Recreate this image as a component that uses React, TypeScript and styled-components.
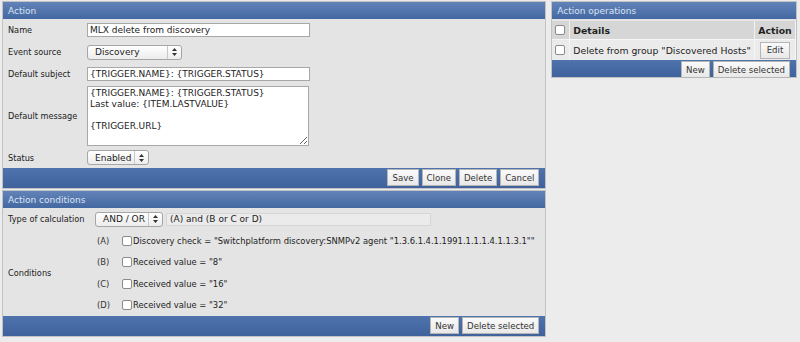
import React from "react";
import styled, { createGlobalStyle } from "styled-components";

const GlobalStyle = createGlobalStyle`
  body {
    margin: 0;
    background: #ececec;
    font-family: "DejaVu Sans", Verdana, sans-serif;
    color: #222;
  }
`;

const Page = styled.div`
  display: flex;
  align-items: flex-start;
  gap: 5px;
  padding: 1px 3px 0 2px;
`;

const Column = styled.div<{ width: number }>`
  display: flex;
  flex-direction: column;
  gap: 1px;
  width: ${(p) => p.width}px;
`;

const Panel = styled.div`
  border: 1px solid #c2c2c2;
  background: #e4e4e4;
`;

const PanelHeader = styled.div`
  height: 17px;
  display: flex;
  align-items: center;
  padding-left: 5px;
  font-size: 9px;
  color: #dbe4f2;
  background: linear-gradient(#6283b8, #4468a2);
`;

const FormRow = styled.div<{ height?: number; labelWidth?: number }>`
  display: grid;
  grid-template-columns: ${(p) => p.labelWidth ?? 79}px 1fr;
  align-items: center;
  min-height: ${(p) => p.height ?? 22}px;
  padding-left: 5px;
`;

const Label = styled.span`
  font-size: 8.2px;
  color: #222;
`;

const TextInput = styled.div<{ width: number }>`
  width: ${(p) => p.width}px;
  height: 14px;
  box-sizing: border-box;
  border: 1px solid #a8a8a8;
  background: #fff;
  font-size: 9px;
  line-height: 12px;
  padding-left: 2px;
  white-space: nowrap;
  overflow: hidden;
`;

const TextArea = styled.textarea`
  width: 222px;
  height: 60px;
  box-sizing: border-box;
  border: 1px solid #a8a8a8;
  background: #fff;
  font-family: "DejaVu Sans", Verdana, sans-serif;
  font-size: 9px;
  line-height: 11px;
  padding: 1px 2px;
  margin: 0;
  color: #222;
  resize: both;
  overflow: hidden;
`;

const SelectBox = styled.div<{ width: number }>`
  width: ${(p) => p.width}px;
  height: 15px;
  box-sizing: border-box;
  display: flex;
  align-items: center;
  border: 1px solid #a6a6a6;
  border-radius: 3px;
  background: linear-gradient(#ffffff, #ececec);
  font-size: 9px;
`;

const SelectText = styled.span`
  flex: 1;
  padding-left: 7px;
`;

const SelectArrow = styled.span`
  width: 13px;
  height: 100%;
  display: flex;
  align-items: center;
  justify-content: center;
  border-left: 1px solid #c8c8c8;
`;

const Footer = styled.div<{ height: number }>`
  height: ${(p) => p.height}px;
  display: flex;
  justify-content: flex-end;
  align-items: flex-start;
  gap: 3px;
  padding: 1px 6px 0 0;
  background: linear-gradient(#4f73ad, #3f629c);
`;

const Button = styled.button`
  height: 17px;
  box-sizing: border-box;
  padding: 0 4px;
  border: 1px solid #b5b5b5;
  background: linear-gradient(#fafafa, #e8e8e8);
  font-family: "DejaVu Sans", Verdana, sans-serif;
  font-size: 8.6px;
  color: #333;
  cursor: pointer;
`;

const CalcField = styled.div`
  width: 265px;
  height: 13px;
  box-sizing: border-box;
  margin-left: 3px;
  border: 1px solid #d6d6d6;
  background: #ebebeb;
  font-size: 9px;
  line-height: 11px;
  padding-left: 3px;
`;

const Inline = styled.div`
  display: flex;
  align-items: center;
`;

const ConditionList = styled.div`
  display: flex;
  flex-direction: column;
`;

const ConditionRow = styled.div`
  display: flex;
  align-items: center;
  height: 21.5px;
  font-size: 8.4px;
  white-space: nowrap;
`;

const CondId = styled.span`
  width: 25px;
  padding-left: 2px;
  color: #333;
`;

const Check = styled.span`
  width: 8px;
  height: 8px;
  border: 1px solid #8a8a8a;
  border-radius: 2px;
  background: #fff;
  margin-right: 1px;
  flex-shrink: 0;
`;

const OpTable = styled.div`
  margin-top: 2px;
  display: grid;
  grid-template-columns: 18px 1fr 41px;
  font-size: 9px;
`;

const HeadCell = styled.div<{ left?: boolean }>`
  height: 18px;
  display: flex;
  align-items: center;
  justify-content: ${(p) => (p.left ? "flex-start" : "center")};
  padding-left: ${(p) => (p.left ? 3 : 0)}px;
  background: #d6d6d6;
  border-right: 1px solid #f2f2f2;
  font-weight: bold;
  font-size: 9.3px;
`;

const Cell = styled.div<{ left?: boolean }>`
  height: 20px;
  display: flex;
  align-items: center;
  justify-content: ${(p) => (p.left ? "flex-start" : "center")};
  padding-left: ${(p) => (p.left ? 3 : 0)}px;
  background: #ebebeb;
  border-right: 1px solid #f6f6f6;
  border-top: 1px solid #f6f6f6;
  font-size: 9.3px;
  white-space: nowrap;
`;

const SmallButton = styled(Button)`
  height: 17px;
  padding: 0 6px;
`;

const UpDown = () => (
  <svg width="5" height="8" viewBox="0 0 5 8">
    <path d="M2.5 0 L5 3 L0 3 Z M2.5 8 L5 5 L0 5 Z" fill="#333" />
  </svg>
);

const Select = ({ value, width }: { value: string; width: number }) => (
  <SelectBox width={width}>
    <SelectText>{value}</SelectText>
    <SelectArrow>
      <UpDown />
    </SelectArrow>
  </SelectBox>
);

const conditions = [
  ["(A)", 'Discovery check = "Switchplatform discovery:SNMPv2 agent "1.3.6.1.4.1.1991.1.1.1.4.1.1.3.1""'],
  ["(B)", 'Received value = "8"'],
  ["(C)", 'Received value = "16"'],
  ["(D)", 'Received value = "32"'],
];

export default function App() {
  return (
    <>
      <GlobalStyle />
      <Page>
        <Column width={545}>
          <Panel>
            <PanelHeader>Action</PanelHeader>
            <FormRow>
              <Label>Name</Label>
              <TextInput width={223}>MLX delete from discovery</TextInput>
            </FormRow>
            <FormRow>
              <Label>Event source</Label>
              <Select value="Discovery" width={95} />
            </FormRow>
            <FormRow>
              <Label>Default subject</Label>
              <TextInput width={223}>{"{TRIGGER.NAME}: {TRIGGER.STATUS}"}</TextInput>
            </FormRow>
            <FormRow height={62}>
              <Label>Default message</Label>
              <TextArea
                readOnly
                defaultValue={"{TRIGGER.NAME}: {TRIGGER.STATUS}\nLast value: {ITEM.LASTVALUE}\n\n{TRIGGER.URL}"}
              />
            </FormRow>
            <FormRow height={21}>
              <Label>Status</Label>
              <Select value="Enabled" width={62} />
            </FormRow>
            <Footer height={19}>
              <Button>Save</Button>
              <Button>Clone</Button>
              <Button>Delete</Button>
              <Button>Cancel</Button>
            </Footer>
          </Panel>

          <Panel>
            <PanelHeader>Action conditions</PanelHeader>
            <FormRow labelWidth={87}>
              <Label>Type of calculation</Label>
              <Inline>
                <Select value="AND / OR" width={68} />
                <CalcField>(A) and (B or C or D)</CalcField>
              </Inline>
            </FormRow>
            <FormRow labelWidth={87}>
              <Label>Conditions</Label>
              <ConditionList>
                {conditions.map(([id, text]) => (
                  <ConditionRow key={id}>
                    <CondId>{id}</CondId>
                    <Check />
                    <span>{text}</span>
                  </ConditionRow>
                ))}
              </ConditionList>
            </FormRow>
            <Footer height={19}>
              <Button>New</Button>
              <Button>Delete selected</Button>
            </Footer>
          </Panel>
        </Column>

        <Column width={246}>
          <Panel>
            <PanelHeader>Action operations</PanelHeader>
            <OpTable>
              <HeadCell>
                <Check />
              </HeadCell>
              <HeadCell left>Details</HeadCell>
              <HeadCell>Action</HeadCell>
              <Cell>
                <Check />
              </Cell>
              <Cell left>Delete from group "Discovered Hosts"</Cell>
              <Cell>
                <SmallButton>Edit</SmallButton>
              </Cell>
            </OpTable>
            <Footer height={16}>
              <Button>New</Button>
              <Button>Delete selected</Button>
            </Footer>
          </Panel>
        </Column>
      </Page>
    </>
  );
}
